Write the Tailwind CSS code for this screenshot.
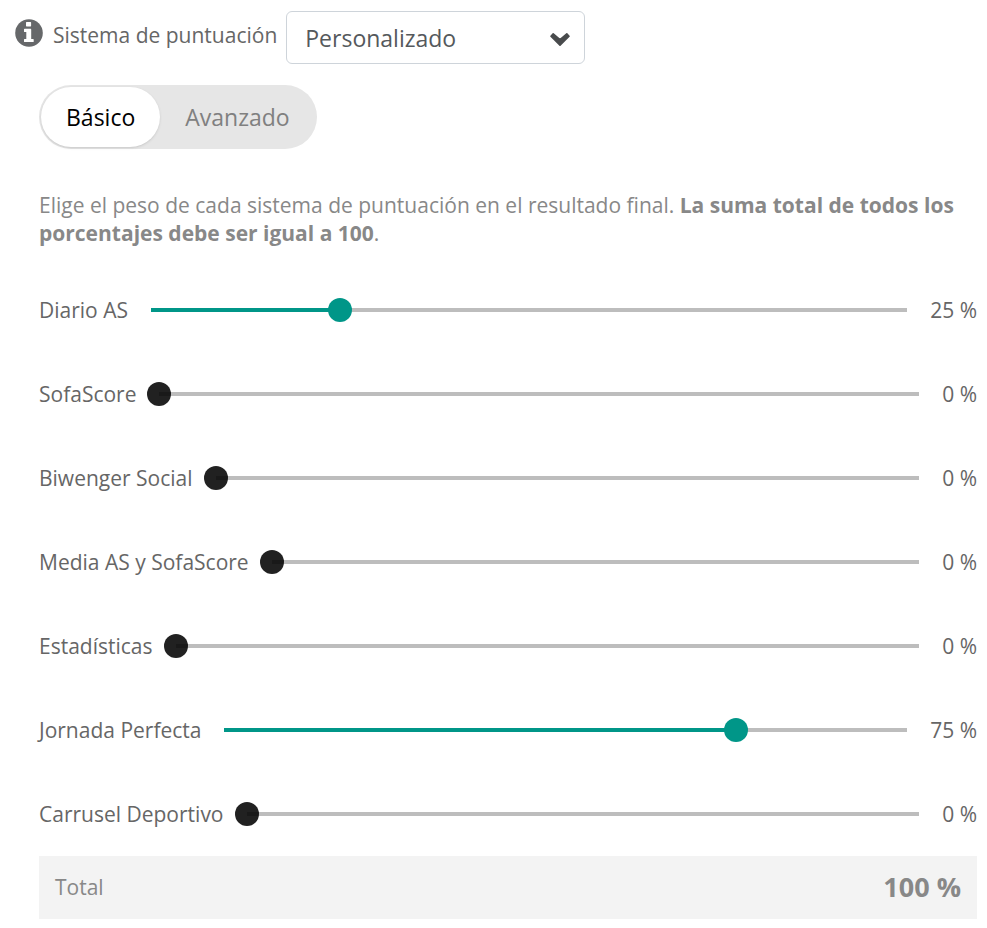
<!DOCTYPE html>
<html lang="es">
<head>
    <meta charset="UTF-8">
    <meta name="viewport" content="width=device-width, initial-scale=1.0">
    <title>Sistema de puntuación</title>
    <script src="https://cdn.jsdelivr.net/npm/@tailwindcss/browser@4"></script>
</head>
<body class="bg-white font-['Open_Sans',sans-serif] text-[21px] text-[#666]">
    <form class="pl-[15px] pr-[10px] pt-[11px]">
        <div class="flex items-start">
            <svg class="mt-2 h-7 w-7 shrink-0" viewBox="0 0 28 28" aria-hidden="true">
                <circle cx="14" cy="14" r="13.8" fill="#66686a"/>
                <path fill="#fff" d="M11.6 3h3.9q.6 0 .6.6v3.2q0 .6-.6.6h-3.9q-.6 0-.6-.6V3.6q0-.6.6-.6zM9.6 9.8h6q.6 0 .6.6v9.5h1.9q.6 0 .6.6v2q0 .6-.6.6H9.6q-.6 0-.6-.6v-2q0-.6.6-.6h1.7V13H9.6q-.6 0-.6-.6v-2q0-.6.6-.6z"/>
            </svg>
            <label for="system" class="ml-[10px] mt-2 leading-8">Sistema de puntuación</label>
            <div class="relative ml-[9px] w-[299px]">
                <select id="system" class="h-[53px] w-full appearance-none rounded-md border border-[#ced4da] bg-white px-[18px] pt-px text-[23px] text-[#55595c]">
                    <option selected>Personalizado</option>
                    <option>Diario AS</option>
                    <option>SofaScore</option>
                </select>
                <svg class="pointer-events-none absolute right-[15px] top-[21px] h-[14px] w-5" viewBox="0 0 20 14" aria-hidden="true">
                    <path d="M1 4.2 3.2 1.8 10 7.6l6.8-5.800L19 4.200l-9 9z" fill="#494b4d" stroke="#494b4d" stroke-width="1.6" stroke-linejoin="round"/>
                </svg>
            </div>
        </div>

        <div class="pl-6">
            <div class="mt-[21px] flex h-16 w-fit rounded-full bg-[#e6e6e6] p-[2px] text-[23px]">
                <button type="button" class="rounded-full bg-white px-[25px] text-black shadow">Básico</button>
                <button type="button" class="px-[25px] text-[#808080]">Avanzado</button>
            </div>

            <p class="mt-[42px] leading-7 text-[#888]">Elige el peso de cada sistema de puntuación en el resultado final. <strong>La suma total de todos los porcentajes debe ser igual a 100</strong>.</p>

            <div class="mt-[21px]">
                <div class="flex h-21 items-center gap-[11px]">
                    <label for="as" class="pt-px">Diario AS</label>
                    <input id="as" type="range" value="25" style="--v: 25%" class="h-6 min-w-0 flex-1 appearance-none bg-[linear-gradient(to_right,#009688_var(--v),#bdbdbd_var(--v))] bg-[length:calc(100%-24px)_4px] bg-center bg-no-repeat [&::-webkit-slider-thumb]:h-6 [&::-webkit-slider-thumb]:w-6 [&::-webkit-slider-thumb]:appearance-none [&::-webkit-slider-thumb]:rounded-full [&::-webkit-slider-thumb]:bg-[#009688]">
                    <output for="as" class="pt-px">25 %</output>
                </div>
                <div class="flex h-21 items-center gap-[11px]">
                    <label for="sofascore" class="pt-px">SofaScore</label>
                    <input id="sofascore" type="range" value="0" style="--v: 0%" class="h-6 min-w-0 flex-1 appearance-none bg-[linear-gradient(to_right,#009688_var(--v),#bdbdbd_var(--v))] bg-[length:calc(100%-24px)_4px] bg-center bg-no-repeat [&::-webkit-slider-thumb]:h-6 [&::-webkit-slider-thumb]:w-6 [&::-webkit-slider-thumb]:appearance-none [&::-webkit-slider-thumb]:rounded-full [&::-webkit-slider-thumb]:bg-black/87">
                    <output for="sofascore" class="pt-px">0 %</output>
                </div>
                <div class="flex h-21 items-center gap-[11px]">
                    <label for="social" class="pt-px">Biwenger Social</label>
                    <input id="social" type="range" value="0" style="--v: 0%" class="h-6 min-w-0 flex-1 appearance-none bg-[linear-gradient(to_right,#009688_var(--v),#bdbdbd_var(--v))] bg-[length:calc(100%-24px)_4px] bg-center bg-no-repeat [&::-webkit-slider-thumb]:h-6 [&::-webkit-slider-thumb]:w-6 [&::-webkit-slider-thumb]:appearance-none [&::-webkit-slider-thumb]:rounded-full [&::-webkit-slider-thumb]:bg-black/87">
                    <output for="social" class="pt-px">0 %</output>
                </div>
                <div class="flex h-21 items-center gap-[11px]">
                    <label for="media" class="pt-px">Media AS y SofaScore</label>
                    <input id="media" type="range" value="0" style="--v: 0%" class="h-6 min-w-0 flex-1 appearance-none bg-[linear-gradient(to_right,#009688_var(--v),#bdbdbd_var(--v))] bg-[length:calc(100%-24px)_4px] bg-center bg-no-repeat [&::-webkit-slider-thumb]:h-6 [&::-webkit-slider-thumb]:w-6 [&::-webkit-slider-thumb]:appearance-none [&::-webkit-slider-thumb]:rounded-full [&::-webkit-slider-thumb]:bg-black/87">
                    <output for="media" class="pt-px">0 %</output>
                </div>
                <div class="flex h-21 items-center gap-[11px]">
                    <label for="stats" class="pt-px">Estadísticas</label>
                    <input id="stats" type="range" value="0" style="--v: 0%" class="h-6 min-w-0 flex-1 appearance-none bg-[linear-gradient(to_right,#009688_var(--v),#bdbdbd_var(--v))] bg-[length:calc(100%-24px)_4px] bg-center bg-no-repeat [&::-webkit-slider-thumb]:h-6 [&::-webkit-slider-thumb]:w-6 [&::-webkit-slider-thumb]:appearance-none [&::-webkit-slider-thumb]:rounded-full [&::-webkit-slider-thumb]:bg-black/87">
                    <output for="stats" class="pt-px">0 %</output>
                </div>
                <div class="flex h-21 items-center gap-[11px]">
                    <label for="jornada" class="pt-px">Jornada Perfecta</label>
                    <input id="jornada" type="range" value="75" style="--v: 75%" class="h-6 min-w-0 flex-1 appearance-none bg-[linear-gradient(to_right,#009688_var(--v),#bdbdbd_var(--v))] bg-[length:calc(100%-24px)_4px] bg-center bg-no-repeat [&::-webkit-slider-thumb]:h-6 [&::-webkit-slider-thumb]:w-6 [&::-webkit-slider-thumb]:appearance-none [&::-webkit-slider-thumb]:rounded-full [&::-webkit-slider-thumb]:bg-[#009688]">
                    <output for="jornada" class="pt-px">75 %</output>
                </div>
                <div class="flex h-21 items-center gap-[11px]">
                    <label for="carrusel" class="pt-px">Carrusel Deportivo</label>
                    <input id="carrusel" type="range" value="0" style="--v: 0%" class="h-6 min-w-0 flex-1 appearance-none bg-[linear-gradient(to_right,#009688_var(--v),#bdbdbd_var(--v))] bg-[length:calc(100%-24px)_4px] bg-center bg-no-repeat [&::-webkit-slider-thumb]:h-6 [&::-webkit-slider-thumb]:w-6 [&::-webkit-slider-thumb]:appearance-none [&::-webkit-slider-thumb]:rounded-full [&::-webkit-slider-thumb]:bg-black/87">
                    <output for="carrusel" class="pt-px">0 %</output>
                </div>
            </div>

            <div class="flex h-[63px] items-center justify-between bg-[#f3f3f3] px-4 text-[#888]">
                <span>Total</span>
                <strong class="text-[27px]">100 %</strong>
            </div>
        </div>
    </form>
</body>
</html>
